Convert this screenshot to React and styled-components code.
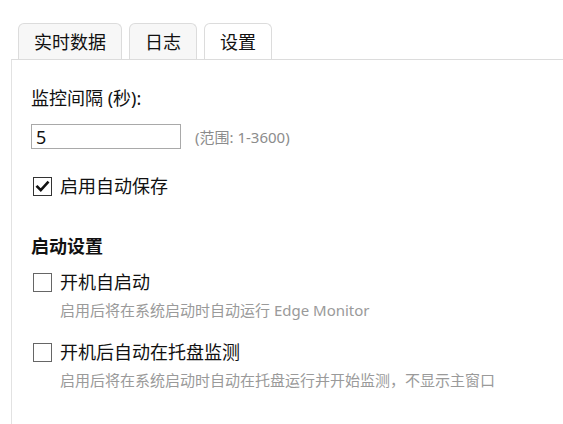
import React, { useState } from "react";
import styled, { createGlobalStyle } from "styled-components";

const GlobalStyle = createGlobalStyle`
  html, body {
    margin: 0;
    background: #ffffff;
  }
  body {
    font-family: "Noto Sans", "Noto Sans CJK SC", sans-serif;
    color: #111;
  }
`;

const Page = styled.div`
  padding: 23px 0 0 11px;
  height: 401px;
  display: flex;
  flex-direction: column;
  box-sizing: content-box;
  overflow: hidden;
`;

const TabBar = styled.div`
  display: flex;
  gap: 7px;
  padding-left: 7px;
`;

const Tab = styled.button`
  height: 36px;
  box-sizing: border-box;
  padding: 0 15px;
  border: 1px solid #dcdcdc;
  border-bottom: none;
  border-radius: 6px 6px 0 0;
  background: ${(p) => (p.$active ? "#ffffff" : "#f7f7f7")};
  font: inherit;
  font-size: 18px;
  line-height: 24px;
  color: #111;
  cursor: pointer;
`;

const Panel = styled.div`
  flex: 1;
  border-top: 1px solid #dcdcdc;
  border-left: 1px solid #e2e2e2;
  padding: 26px 19px 0;
  display: flex;
  flex-direction: column;
`;

const FieldLabel = styled.div`
  font-size: 18px;
  line-height: 24px;
`;

const InputRow = styled.div`
  display: flex;
  align-items: center;
  gap: 14px;
  margin-top: 14px;
`;

const NumberInput = styled.input`
  width: 150px;
  height: 25px;
  box-sizing: border-box;
  border: 1px solid #a9a9a9;
  padding: 0 4px;
  font: inherit;
  font-size: 18px;
  color: #111;
  outline: none;
`;

const Hint = styled.span`
  font-size: 15px;
  color: #8c8c8c;
`;

const CheckRow = styled.label`
  display: flex;
  align-items: center;
  gap: 8px;
  margin: ${(p) => p.$mt}px 0 0 2px;
  font-size: 18px;
  line-height: 24px;
  cursor: pointer;
`;

const Box = styled.span`
  width: 19px;
  height: 19px;
  box-sizing: border-box;
  border: 1px solid ${(p) => (p.$checked ? "#333" : "#666")};
  background: #fff;
  display: flex;
  align-items: center;
  justify-content: center;
`;

const SectionTitle = styled.div`
  margin-top: 36px;
  font-size: 18px;
  line-height: 24px;
  font-weight: 700;
`;

const Description = styled.div`
  margin: 6px 0 0 29px;
  font-size: 15px;
  line-height: 20px;
  color: #9a9a9a;
`;

const CheckBox = ({ checked, onToggle, children, mt }) => (
  <CheckRow $mt={mt} onClick={onToggle}>
    <Box $checked={checked}>
      {checked && (
        <svg width="15" height="15" viewBox="0 0 14 14">
          <path
            d="M2.2 7.2 L5.4 10.4 L11.8 3.4"
            fill="none"
            stroke="#111"
            strokeWidth="2.4"
            strokeLinecap="square"
          />
        </svg>
      )}
    </Box>
    <span>{children}</span>
  </CheckRow>
);

const tabs = ["实时数据", "日志", "设置"];

export default function App() {
  const [active, setActive] = useState(2);
  const [interval, setIntervalValue] = useState("5");
  const [autoSave, setAutoSave] = useState(true);
  const [autoStart, setAutoStart] = useState(false);
  const [trayStart, setTrayStart] = useState(false);

  return (
    <>
      <GlobalStyle />
      <Page>
        <TabBar>
          {tabs.map((t, i) => (
            <Tab key={t} $active={i === active} onClick={() => setActive(i)}>
              {t}
            </Tab>
          ))}
        </TabBar>
        <Panel>
          <FieldLabel>监控间隔 (秒):</FieldLabel>
          <InputRow>
            <NumberInput
              value={interval}
              onChange={(e) => setIntervalValue(e.target.value)}
            />
            <Hint>(范围: 1-3600)</Hint>
          </InputRow>
          <CheckBox mt={25} checked={autoSave} onToggle={() => setAutoSave(!autoSave)}>
            启用自动保存
          </CheckBox>

          <SectionTitle>启动设置</SectionTitle>
          <CheckBox mt={12} checked={autoStart} onToggle={() => setAutoStart(!autoStart)}>
            开机自启动
          </CheckBox>
          <Description>启用后将在系统启动时自动运行 Edge Monitor</Description>
          <CheckBox mt={20} checked={trayStart} onToggle={() => setTrayStart(!trayStart)}>
            开机后自动在托盘监测
          </CheckBox>
          <Description>启用后将在系统启动时自动在托盘运行并开始监测，不显示主窗口</Description>
        </Panel>
      </Page>
    </>
  );
}
